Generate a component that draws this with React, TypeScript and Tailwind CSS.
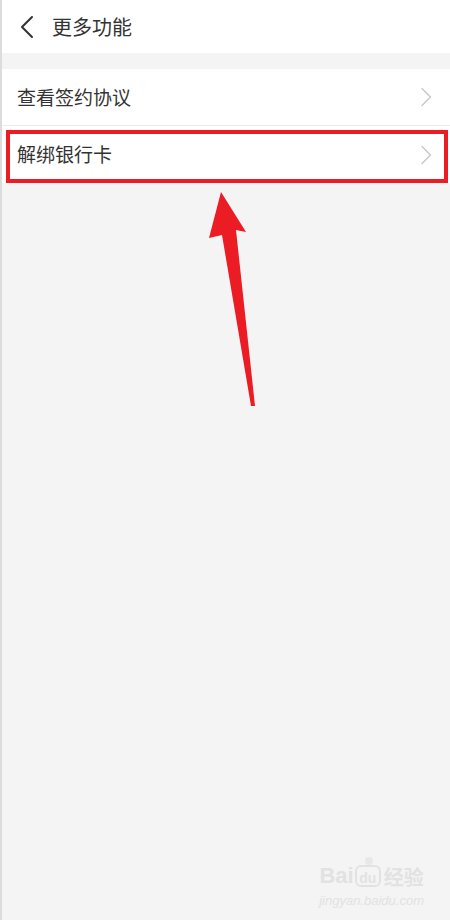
const font = { fontFamily: '"Noto Sans CJK SC", "Noto Sans", sans-serif' };

function Chevron() {
  return (
    <svg width="12" height="20" viewBox="0 0 12 20" fill="none" stroke="#c9c9c9" strokeWidth="1.5">
      <path d="M2 1.5 L10.5 10 L2 18.5" strokeLinecap="round" strokeLinejoin="round" />
    </svg>
  );
}

function Row({ label, border }: { label: string; border?: boolean }) {
  return (
    <div className={`flex h-[57px] items-center justify-between bg-white pl-[15px] pr-[18px] ${border ? "border-b border-[#ececec]" : ""}`}>
      <span className="text-[19px] text-[#333]">{label}</span>
      <Chevron />
    </div>
  );
}

export default function App() {
  return (
    <div className="relative h-[920px] w-[450px] overflow-hidden border-l-2 border-[#dcdcdc] bg-[#f4f4f4]" style={font}>
      {/* header */}
      <div className="flex h-[53px] items-center bg-white pl-[17px]">
        <svg width="16" height="24" viewBox="0 0 16 24" fill="none" stroke="#333" strokeWidth="2">
          <path d="M13 2 L3 12 L13 22" strokeLinecap="round" strokeLinejoin="round" />
        </svg>
        <span className="ml-[17px] text-[20px] text-[#333]">更多功能</span>
      </div>
      <div className="h-[16px]" />
      <Row label="查看签约协议" border />
      <Row label="解绑银行卡" />

      {/* annotation box */}
      <div className="absolute left-[4px] top-[130px] h-[53px] w-[442px] border-[4px] border-[#ec1c24]" />

      {/* arrow */}
      <svg className="absolute left-0 top-0" width="450" height="920" viewBox="0 0 450 920">
        <path d="M219 192 L244 232 L234 230 L253 406 L249 406 L220 235 L207 238 Z" fill="#ec1c24" />
      </svg>

      {/* watermark */}
      <div className="absolute bottom-[10px] right-[26px] flex flex-col items-center text-[#e2e2e2]">
        <div className="flex items-end leading-none">
          <span className="text-[22px] font-bold" style={{ fontFamily: '"Liberation Sans", sans-serif' }}>Bai</span>
          <span className="relative mx-[1px] flex h-[22px] w-[26px] items-end justify-center rounded-[6px] border-2 border-[#e2e2e2] text-[14px] font-bold" style={{ fontFamily: '"Liberation Sans", sans-serif' }}>
            du
            <span className="absolute -top-[10px] left-[8px] h-[8px] w-[8px] rounded-full bg-[#e8e8e8]" />
          </span>
          <span className="ml-[2px] text-[20px] font-bold">经验</span>
        </div>
        <span className="mt-[4px] text-[13px] italic" style={{ fontFamily: '"Liberation Sans", sans-serif' }}>jingyan.baidu.com</span>
      </div>
    </div>
  );
}
